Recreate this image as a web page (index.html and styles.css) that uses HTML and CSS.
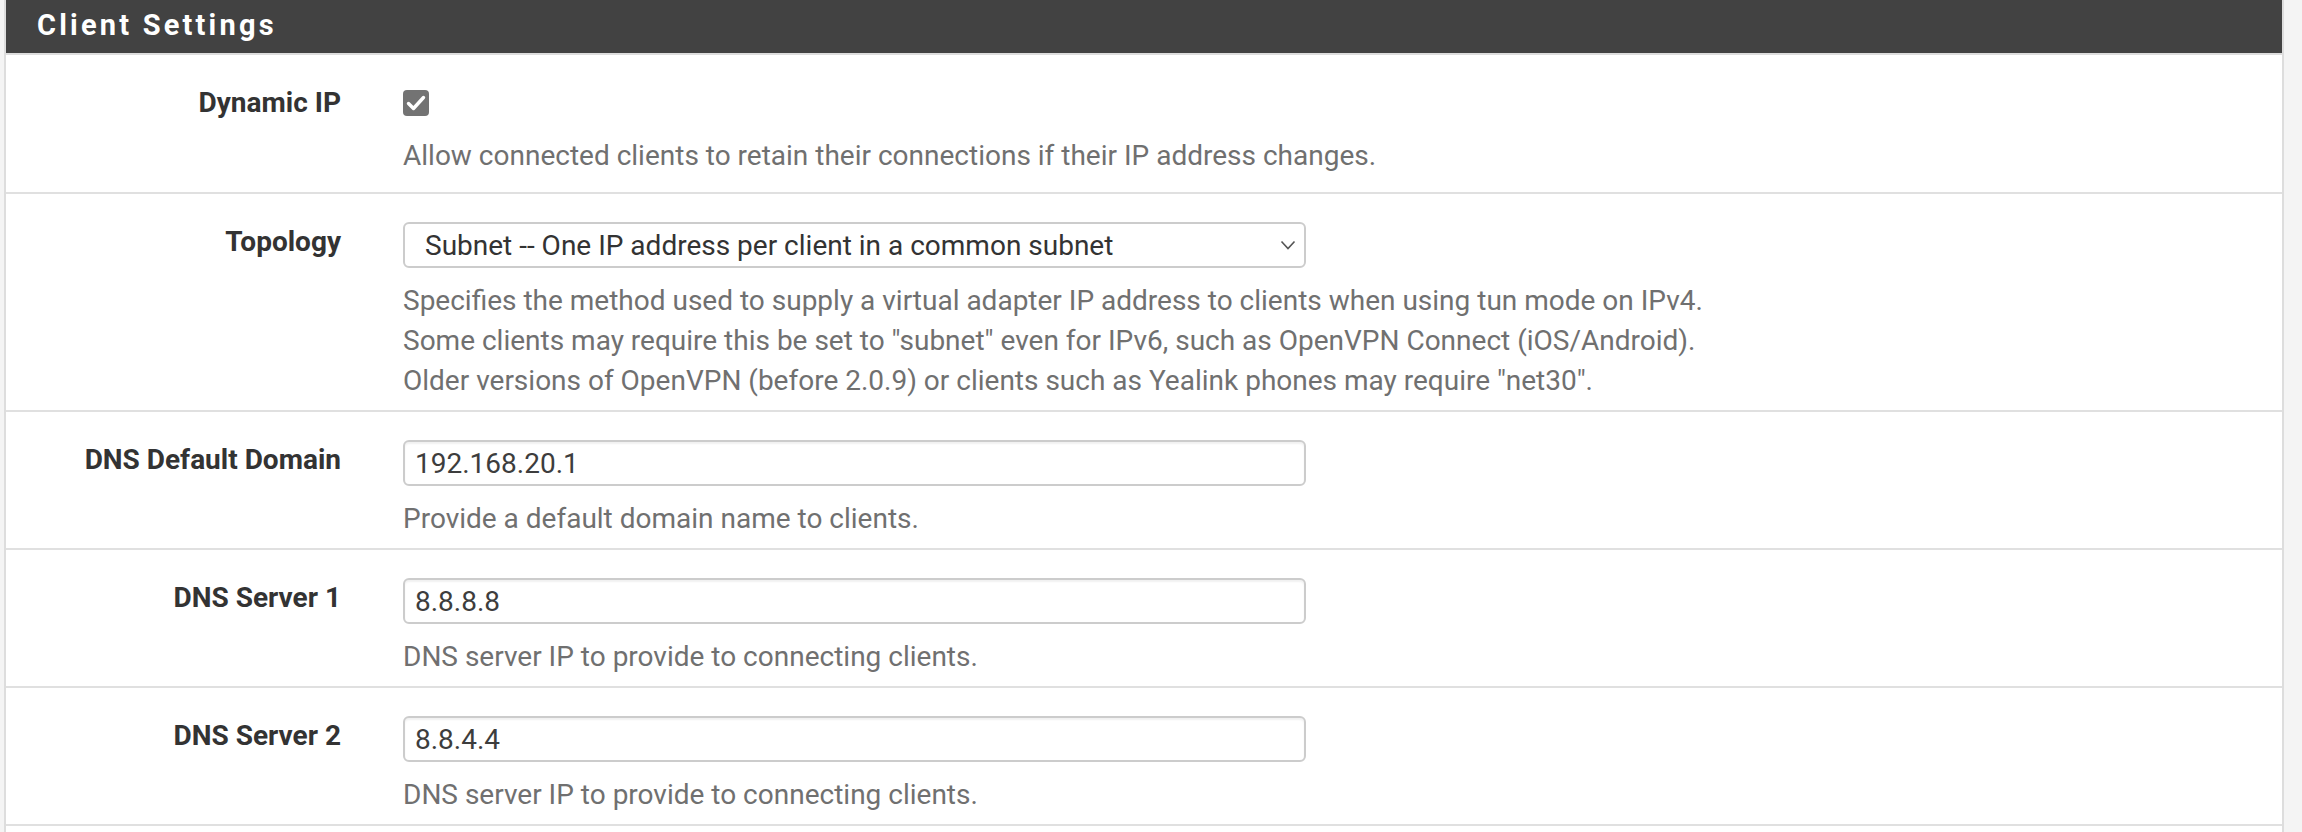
FILE: index.html
```html
<!DOCTYPE html>
<html lang="en">

<head>
    <meta charset="UTF-8">
    <meta name="viewport" content="width=device-width, initial-scale=1.0">
    <title>Client Settings</title>
    <link rel="stylesheet" href="styles.css">
</head>

<body>
    <div class="panel">
        <div class="panel-heading">
            <h2 class="panel-title">Client Settings</h2>
        </div>

        <div class="form-row first">
            <label class="row-label" for="dynamic">Dynamic IP</label>
            <div class="row-control">
                <div class="check-line">
                    <span class="checkbox" id="dynamic">
                        <svg width="26" height="26" viewBox="0 0 26 26">
                            <path d="M5.5 13.5 L10.5 18.5 L20.5 7.5" fill="none" stroke="#fff" stroke-width="3.4" stroke-linecap="round" stroke-linejoin="round" />
                        </svg>
                    </span>
                </div>
                <div class="help">Allow connected clients to retain their connections if their IP address changes.</div>
            </div>
        </div>

        <div class="form-row">
            <label class="row-label">Topology</label>
            <div class="row-control">
                <div class="select">
                    <span>Subnet -- One IP address per client in a common subnet</span>
                    <svg class="chevron" width="16" height="10" viewBox="0 0 16 10">
                        <path d="M1.5 1.5 L8 8.5 L14.5 1.5" fill="none" stroke="#555" stroke-width="1.6" />
                    </svg>
                </div>
                <div class="help">
                    Specifies the method used to supply a virtual adapter IP address to clients when using tun mode on IPv4.<br>
                    Some clients may require this be set to "subnet" even for IPv6, such as OpenVPN Connect (iOS/Android).<br>
                    Older versions of OpenVPN (before 2.0.9) or clients such as Yealink phones may require "net30".
                </div>
            </div>
        </div>

        <div class="form-row">
            <label class="row-label" for="domain">DNS Default Domain</label>
            <div class="row-control">
                <input type="text" id="domain" class="input" value="192.168.20.1" />
                <div class="help">Provide a default domain name to clients.</div>
            </div>
        </div>

        <div class="form-row">
            <label class="row-label" for="dns1">DNS Server 1</label>
            <div class="row-control">
                <input type="text" id="dns1" class="input" value="8.8.8.8" />
                <div class="help">DNS server IP to provide to connecting clients.</div>
            </div>
        </div>

        <div class="form-row">
            <label class="row-label" for="dns2">DNS Server 2</label>
            <div class="row-control">
                <input type="text" id="dns2" class="input" value="8.8.4.4" />
                <div class="help">DNS server IP to provide to connecting clients.</div>
            </div>
        </div>

        <div class="form-row">
            <label class="row-label"></label>
            <div class="row-control"></div>
        </div>
    </div>
</body>

</html>
```

FILE: styles.css
```css
body {
    margin: 0;
    background: #f4f4f4;
    font-family: Roboto, "Liberation Sans", sans-serif;
    font-size: 28px;
    color: #333;
}

.panel {
    margin: 0 18px 0 4px;
    background: #fff;
    border-left: 2px solid #ddd;
    border-right: 2px solid #ddd;
}

.panel-heading {
    background: #424242;
    border-bottom: 2px solid #ddd;
    height: 50px;
    padding: 0 0 3px 31px;
}

.panel-title {
    margin: 0;
    color: #fff;
    font-size: 29px;
    font-weight: 700;
    line-height: 50px;
    letter-spacing: 3.2px;
}

.form-row {
    display: grid;
    grid-template-columns: 335px 1fr;
    column-gap: 62px;
    padding: 28px 0 9px;
    border-bottom: 2px solid #e0e0e0;
}

.form-row.first {
    padding-bottom: 16px;
}

.row-label {
    font-weight: 700;
    text-align: right;
    line-height: 40px;
    color: #333;
}

.row-control {
    display: flex;
    flex-direction: column;
    align-items: flex-start;
}

.check-line {
    height: 40px;
    display: flex;
    align-items: center;
}

.checkbox {
    display: block;
    width: 26px;
    height: 26px;
    border-radius: 4px;
    background: #737373;
}

.checkbox svg {
    display: block;
}

.input,
.select {
    box-sizing: border-box;
    width: 903px;
    height: 46px;
    border: 2px solid #ccc;
    border-radius: 6px;
    box-shadow: inset 0 2px 2px rgba(0, 0, 0, 0.06);
    font-family: Roboto, "Liberation Sans", sans-serif;
    font-size: 28px;
    color: #3d3d3d;
    background: #fff;
}

.input {
    padding: 0 10px;
    outline: none;
}

.select {
    display: flex;
    align-items: center;
    justify-content: space-between;
    padding: 0 8px 0 20px;
    box-shadow: none;
    color: #333;
}

.chevron {
    display: block;
}

.help {
    margin-top: 13px;
    color: #707070;
    line-height: 40px;
}
```
